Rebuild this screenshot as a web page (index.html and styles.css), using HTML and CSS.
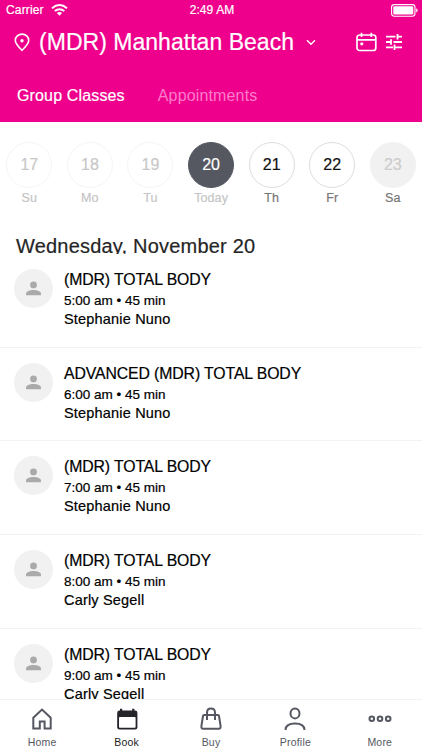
FILE: index.html
```html
<!DOCTYPE html>
<html lang="en">
<head>
<meta charset="utf-8">
<title>Book a class</title>
<link rel="stylesheet" href="styles.css">
</head>
<body>
<div class="app">
  <header class="header">
    <div class="status">
      <div class="carrier"><span>Carrier</span>
        <svg width="17" height="12" viewBox="0 0 17 12"><g fill="none" stroke="#fff" stroke-width="1.9"><path d="M1 4.3Q8.5-2.1 16 4.3M3.7 7.1Q8.5 3.2 13.3 7.1"/></g><path d="M5.9 9.1Q8.5 7.1 11.1 9.1L8.5 11.8Z" fill="#fff"/></svg>
      </div>
      <span class="clock">2:49 AM</span>
      <svg class="battery" width="27" height="13" viewBox="0 0 27 13"><rect x=".6" y=".6" width="23.4" height="11.6" rx="2.6" fill="none" stroke="#fff" stroke-width="1.1"/><rect x="2.3" y="2.3" width="20" height="8.2" rx="1.2" fill="#fff"/><path d="M25.2 4.3q1.4.5 1.4 2.1t-1.4 2.1z" fill="#fff"/></svg>
    </div>
    <div class="location">
      <svg class="pin" width="16" height="19" viewBox="0 0 16 19"><path d="M8 17.3C4.5 13.8 1.3 10.6 1.3 7.4a6.7 6.3 0 0 1 13.4 0C14.7 10.6 11.5 13.8 8 17.3Z" fill="none" stroke="#fff" stroke-width="1.6"/><circle cx="8" cy="7.8" r="1.7" fill="#fff"/></svg>
      <h1>(MDR) Manhattan Beach</h1>
      <svg class="chevron" width="10" height="7" viewBox="0 0 10 7"><path d="M1 1.2 5 5.2 9 1.2" fill="none" stroke="#fff" stroke-width="1.4"/></svg>
      <svg class="calendar" width="21" height="20" viewBox="0 0 21 20"><rect x="1" y="3" width="18.8" height="15.5" rx="2.5" fill="none" stroke="#fff" stroke-width="1.7"/><path d="M1 7.8H19.8M5.5.8V5M15.3.8V5" stroke="#fff" stroke-width="1.7"/><circle cx="5.8" cy="11.8" r="1.6" fill="#fff"/></svg>
      <svg class="filters" width="18" height="18" viewBox="0 0 18 18"><path d="M1 3.7H10.5M13 3.7H17M12.5 1V6.4M1 9H5.6M8.5 9H17M6 6.3V11.7M1 14.3H8M10 14.3H17M9.5 11.6V17" fill="none" stroke="#fff" stroke-width="1.8"/></svg>
    </div>
    <nav class="tabs"><span class="tab-active">Group Classes</span><span class="tab">Appointments</span></nav>
  </header>

  <section class="days">
    <div class="day past"><b>17</b><span>Su</span></div>
    <div class="day past"><b>18</b><span>Mo</span></div>
    <div class="day past"><b>19</b><span>Tu</span></div>
    <div class="day today"><b>20</b><span>Today</span></div>
    <div class="day"><b>21</b><span>Th</span></div>
    <div class="day"><b>22</b><span>Fr</span></div>
    <div class="day closed"><b>23</b><span>Sa</span></div>
  </section>
  <h2>Wednesday, November 20</h2>

  <main class="list">
    <article class="row"><div class="avatar"><svg width="15" height="15" viewBox="0 0 15 15"><circle cx="7.5" cy="3.9" r="3.4"/><path d="M0 14.3V12.6C0 7.8 15 7.8 15 12.6v1.7Z"/></svg></div><div><h3>(MDR) TOTAL BODY</h3><p class="time">5:00 am • 45 min</p><p class="teacher">Stephanie Nuno</p></div></article>
    <article class="row"><div class="avatar"><svg width="15" height="15" viewBox="0 0 15 15"><circle cx="7.5" cy="3.9" r="3.4"/><path d="M0 14.3V12.6C0 7.8 15 7.8 15 12.6v1.7Z"/></svg></div><div><h3>ADVANCED (MDR) TOTAL BODY</h3><p class="time">6:00 am • 45 min</p><p class="teacher">Stephanie Nuno</p></div></article>
    <article class="row"><div class="avatar"><svg width="15" height="15" viewBox="0 0 15 15"><circle cx="7.5" cy="3.9" r="3.4"/><path d="M0 14.3V12.6C0 7.8 15 7.8 15 12.6v1.7Z"/></svg></div><div><h3>(MDR) TOTAL BODY</h3><p class="time">7:00 am • 45 min</p><p class="teacher">Stephanie Nuno</p></div></article>
    <article class="row"><div class="avatar"><svg width="15" height="15" viewBox="0 0 15 15"><circle cx="7.5" cy="3.9" r="3.4"/><path d="M0 14.3V12.6C0 7.8 15 7.8 15 12.6v1.7Z"/></svg></div><div><h3>(MDR) TOTAL BODY</h3><p class="time">8:00 am • 45 min</p><p class="teacher">Carly Segell</p></div></article>
    <article class="row"><div class="avatar"><svg width="15" height="15" viewBox="0 0 15 15"><circle cx="7.5" cy="3.9" r="3.4"/><path d="M0 14.3V12.6C0 7.8 15 7.8 15 12.6v1.7Z"/></svg></div><div><h3>(MDR) TOTAL BODY</h3><p class="time">9:00 am • 45 min</p><p class="teacher">Carly Segell</p></div></article>
  </main>

  <nav class="bottom">
    <div class="item"><svg width="24" height="24" viewBox="0 0 24 24"><path d="M3.3 10.7 12 2.6l8.7 8.1v10.8H14.6v-7H9.8v7H3.3Z"/></svg><span>Home</span></div>
    <div class="item current"><svg width="24" height="24" viewBox="0 0 24 24"><rect x="2.2" y="3.6" width="20.2" height="19" rx="2.4" class="solid"/><path class="solid" d="M5 1.7h2.2v4H5zM17.2 1.7h2.2v4h-2.2z"/><rect x="4" y="10" width="16.6" height="10.8" rx=".8" class="window"/></svg><span>Book</span></div>
    <div class="item"><svg width="24" height="24" viewBox="0 0 24 24"><path d="M5 8H19Q19.8 8 20 9L21.6 19.2Q21.8 21.8 19.8 21.8H4.2Q2.2 21.8 2.4 19.2L4 9Q4.2 8 5 8ZM8 12.9V5.9Q8 1.6 12 1.6T16 5.9v7"/></svg><span>Buy</span></div>
    <div class="item"><svg width="24" height="24" viewBox="0 0 24 24"><ellipse cx="12" cy="6.4" rx="4.5" ry="5"/><path d="M2.5 23C2.5 18.5 5.5 16.4 12 16.4s9.5 2.1 9.5 6.6"/></svg><span>Profile</span></div>
    <div class="item"><svg width="24" height="24" viewBox="0 0 24 24"><circle cx="3.8" cy="11.7" r="2.3"/><circle cx="12" cy="11.7" r="2.3"/><circle cx="20.2" cy="11.7" r="2.3"/></svg><span>More</span></div>
  </nav>
</div>
</body>
</html>
```
FILE: styles.css
```css
* { box-sizing: border-box; }
body, h1, h2, h3, p { margin: 0; font-weight: 400; }
body { font-family: "Liberation Sans", Arial, sans-serif; background: #fff; color: #111; -webkit-text-stroke: .2px currentColor; }
svg { display: block; flex: none; }
.app { width: 422px; height: 750px; overflow: hidden; display: flex; flex-direction: column; }

.header { height: 122px; flex: none; background: #ee008c; color: #fff; }
.status { height: 20px; display: grid; grid-template-columns: 1fr auto 1fr; align-items: center; padding: 0 4px 0 6px; font-size: 12px; line-height: 20px; }
.carrier { display: flex; gap: 7px; align-items: center; letter-spacing: .15px; }
.clock { letter-spacing: .1px; }
.battery { justify-self: end; }
.location { height: 44px; display: flex; align-items: center; padding: 0 19px 0 14px; }
.location h1 { font-size: 23px; line-height: 44px; margin-left: 9px; letter-spacing: .03px; white-space: nowrap; }
.chevron { margin-left: 12px; }
.calendar { margin-left: auto; }
.filters { margin-left: 8px; }
.tabs { display: flex; gap: 33px; padding: 22px 17px 0; font-size: 16px; line-height: 20px; letter-spacing: .15px; }
.tab { color: #ff7ccb; -webkit-text-stroke: 0; }

.days { height: 98px; flex: none; display: grid; grid-template-columns: repeat(7, 60.6px); padding-top: 20px; margin-left: -1px; }
.day { display: flex; flex-direction: column; align-items: center; font-size: 12.5px; color: #777; }
.day b { width: 46px; height: 46px; border: 1px solid #ddd; border-radius: 50%; color: #111; font-weight: 400; font-size: 16px; line-height: 44px; text-align: center; }
.day span { margin-top: 2px; line-height: 16px; letter-spacing: .1px; }
.past, .today { color: #c5c5c5; }
.past b { color: #c8c8c8; border-color: #f5f5f5; }
.today b { color: #fff; background: #555761; border-color: #555761; }
.closed b { color: #ccc; background: #f1f1f1; border-color: #f1f1f1; }

h2 { height: 34px; flex: none; overflow: hidden; padding: 14px 16px 0; font-size: 20px; line-height: 24px; letter-spacing: .2px; color: #252525; white-space: nowrap; }
.list { flex: 1; min-height: 0; overflow: hidden; }
.row { height: 93.7px; display: flex; gap: 11px; padding: 15px 14px 0; border-bottom: 1px solid #f3f3f3; color: #000; }
.avatar { width: 39px; height: 39px; flex: none; border-radius: 50%; background: #f1f1f1; display: grid; place-items: center; }
.avatar svg { fill: #aaa; }
h3 { font-size: 15.8px; line-height: 22px; letter-spacing: -.1px; }
.time { font-size: 13.5px; line-height: 20px; }
.teacher { font-size: 14.5px; line-height: 16px; letter-spacing: .18px; }

.bottom { height: 51px; flex: none; display: grid; grid-template-columns: repeat(5, 1fr); border-top: 1px solid #f3f3f3; background: #fff; }
.item { display: flex; flex-direction: column; align-items: center; padding-top: 7px; color: #555761; font-size: 10.5px; -webkit-text-stroke: 0; }
.item svg { fill: none; stroke: #555761; stroke-width: 2; }
.item span { line-height: 12px; margin-top: 5px; letter-spacing: .2px; }
.current { color: #222; }
.item .solid { fill: #24252a; stroke: none; }
.item .window { fill: #fff; stroke: none; }
```
